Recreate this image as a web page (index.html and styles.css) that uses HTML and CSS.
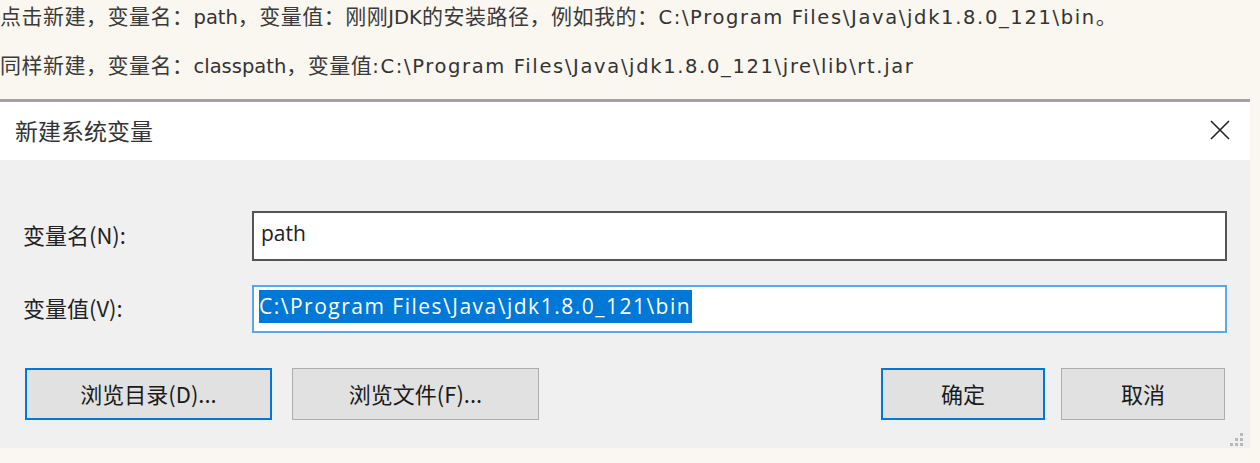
FILE: index.html
```html
<!DOCTYPE html>
<html lang="zh-CN">
<head>
<meta charset="utf-8">
<title>新建系统变量</title>
<link rel="stylesheet" href="styles.css">
</head>
<body>
<p class="para"><span class="zh">点击新建，变量名：</span>path<span class="zh">，变量值：刚刚</span>JDK<span class="zh">的安装路径，例如我的：</span><span class="pathstr">C:\Program Files\Java\jdk1.8.0_121\bin</span><span class="zh">。</span></p>
<p class="para"><span class="zh">同样新建，变量名：</span>classpath<span class="zh">，变量值</span><span class="pathstr">:C:\Program Files\Java\jdk1.8.0_121\jre\lib\rt.jar</span></p>
<div class="dialog">
  <div class="titlebar">
    <span class="title">新建系统变量</span>
    <svg class="close" width="20" height="20" viewBox="0 0 20 20"><path d="M1 1 L19 19 M19 1 L1 19" stroke="#222" stroke-width="1.6" fill="none"/></svg>
  </div>
  <div class="body">
    <div class="row row-name">
      <span class="label">变量名(N):</span>
      <div class="field field-dark"><span class="val">path</span></div>
    </div>
    <div class="row row-value">
      <span class="label">变量值(V):</span>
      <div class="field field-blue"><span class="val sel">C:\Program Files\Java\jdk1.8.0_121\bin</span></div>
    </div>
    <div class="buttons">
      <div class="group">
        <div class="btn btn-wide btn-focus">浏览目录(D)...</div>
        <div class="btn btn-wide">浏览文件(F)...</div>
      </div>
      <div class="group group-right">
        <div class="btn btn-narrow btn-focus">确定</div>
        <div class="btn btn-narrow">取消</div>
      </div>
    </div>
    <svg class="grip" width="16" height="16" viewBox="0 0 16 16">
      <rect x="12" y="2" width="3" height="3" fill="#b8b8b8"/>
      <rect x="7" y="7" width="3" height="3" fill="#b8b8b8"/>
      <rect x="12" y="7" width="3" height="3" fill="#b8b8b8"/>
      <rect x="2" y="12" width="3" height="3" fill="#b8b8b8"/>
      <rect x="7" y="12" width="3" height="3" fill="#b8b8b8"/>
      <rect x="12" y="12" width="3" height="3" fill="#b8b8b8"/>
    </svg>
  </div>
</div>
</body>
</html>
```
FILE: styles.css
```css
html, body {
  margin: 0;
  padding: 0;
  background: #faf7f0;
}
body {
  width: 1260px;
  height: 463px;
  overflow: hidden;
  color: #333;
  font-family: "DejaVu Sans", "Noto Sans CJK SC", sans-serif;
}
.para {
  margin: 0;
  height: 50px;
  line-height: 30px;
  font-size: 19.5px;
  white-space: nowrap;
}
.para:first-child {
  height: 49px;
}
.zh {
  font-family: "Noto Sans CJK SC", sans-serif;
  font-size: 21px;
  letter-spacing: 0.5px;
  color: #3a3a3a;
}
.pathstr {
  letter-spacing: 1.65px;
}
.dialog {
  width: 1250px;
  border-top: 3px solid #a3a3a3;
  font-family: "Noto Sans CJK SC", sans-serif;
  color: #1a1a1a;
}
.titlebar {
  height: 58px;
  background: #fff;
  display: flex;
  align-items: center;
  justify-content: space-between;
  padding: 0 20px 0 15px;
}
.title {
  font-size: 23px;
  color: #333;
  margin-top: -2px;
}
.close {
  display: block;
  margin-top: -2px;
}
.body {
  position: relative;
  height: 288px;
  background: #f0f0f0;
  padding: 0 23px 0 23px;
  box-sizing: border-box;
}
.row {
  display: flex;
  align-items: center;
}
.row-name {
  padding-top: 51px;
}
.row-value {
  padding-top: 24px;
}
.label {
  width: 229px;
  font-size: 22px;
  color: #222;
  margin-bottom: 5px;
}
.field {
  width: 975px;
  box-sizing: border-box;
  background: #fff;
  display: flex;
  align-items: center;
  padding-left: 7px;
}
.field-dark {
  height: 50px;
  border: 2px solid #555;
}
.field-blue {
  height: 48px;
  border: 2px solid #5aa7ea;
  padding-left: 5px;
}
.val {
  font-family: "Open Sans", "Noto Sans CJK SC", sans-serif;
  font-size: 21px;
  color: #222;
  line-height: 33px;
  margin-bottom: 5px;
}
.sel {
  background: #0078d7;
  color: #fff;
  padding-right: 1px;
  letter-spacing: 1.5px;
}
.buttons {
  display: flex;
  justify-content: space-between;
  padding-top: 35px;
}
.group {
  display: flex;
  gap: 20px;
  padding-left: 2px;
}
.group-right {
  gap: 16px;
  padding-left: 0;
  padding-right: 2px;
}
.btn {
  height: 52px;
  box-sizing: border-box;
  background: #e1e1e1;
  border: 1px solid #adadad;
  display: flex;
  align-items: center;
  justify-content: center;
  font-size: 22px;
  color: #1a1a1a;
  padding-bottom: 2px;
}
.btn-focus {
  border: 2px solid #0078d7;
}
.btn-wide {
  width: 247px;
}
.btn-narrow {
  width: 164px;
}
.grip {
  position: absolute;
  right: 6px;
  bottom: 1px;
}
```
